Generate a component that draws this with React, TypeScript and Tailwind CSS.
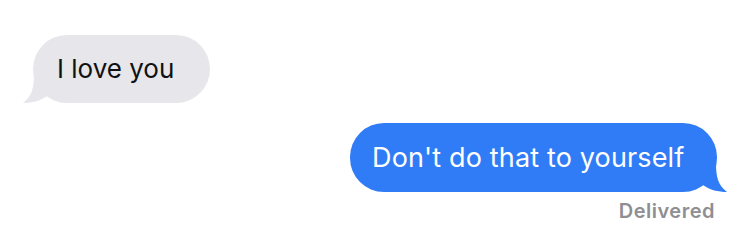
const GrayTail = () => (
  <svg className="absolute left-[-11px] bottom-[-1px]" width="34" height="30" viewBox="0 0 34 30">
    <path d="M12 0 C12 14 10 22 1 29 C10 29 18 27 25 22 L28 0 Z" fill="#e6e6eb" />
  </svg>
);

const BlueTail = () => (
  <svg className="absolute right-[-11px] bottom-[-1px]" width="34" height="30" viewBox="0 0 34 30">
    <path d="M22 0 C22 14 24 22 33 29 C24 29 16 27 9 22 L6 0 Z" fill="#2f7cf6" />
  </svg>
);

export default function App() {
  return (
    <div className="w-[749px] h-[249px] bg-white overflow-hidden flex flex-col" style={{ fontFamily: 'Inter, "Liberation Sans", sans-serif' }}>
      {/* received */}
      <div className="pt-[35px] pl-[33px] flex">
        <div className="relative h-[68px] w-[177px] rounded-[34px] bg-[#e6e6eb] flex items-center pl-[24px]">
          <GrayTail />
          <span className="relative text-[26px] text-[#111] leading-none">I love you</span>
        </div>
      </div>

      {/* sent */}
      <div className="mt-[20px] pr-[32px] flex justify-end">
        <div className="relative h-[69px] w-[367px] rounded-[34px] bg-[#2f7cf6] flex items-center pl-[22px]">
          <BlueTail />
          <span className="relative text-[27px] tracking-[0.15px] text-white leading-none">Don't do that to yourself</span>
        </div>
      </div>
      <div className="mt-[9px] pr-[34px] flex justify-end">
        <span className="text-[20px] tracking-[0.5px] font-semibold text-[#8e8e93] leading-none">Delivered</span>
      </div>
    </div>
  );
}
